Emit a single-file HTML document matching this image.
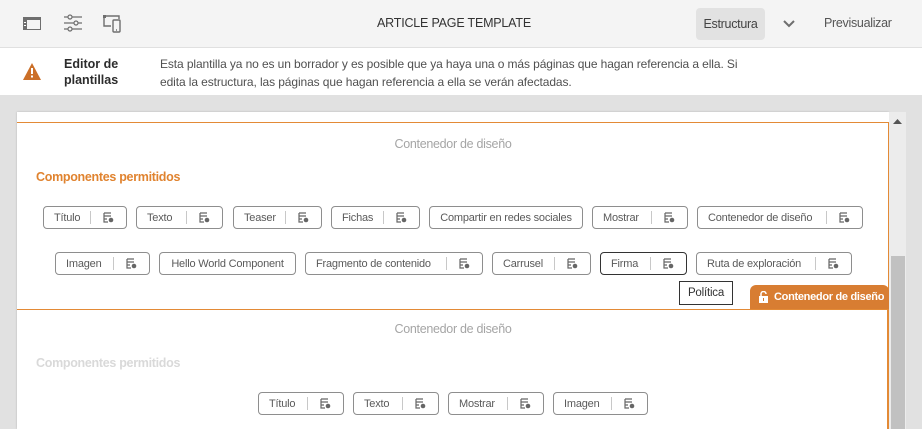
<!DOCTYPE html>
<html><head><meta charset="utf-8"><style>
*{margin:0;padding:0;box-sizing:border-box}
body{width:922px;height:429px;overflow:hidden;background:#e1e1e1;font-family:"Liberation Sans",sans-serif;position:relative;color:#4b4b4b}
.abs{position:absolute}
.top{left:0;top:0;width:922px;height:48px;background:#f4f4f4;border-bottom:1px solid #e0e0e0}
.warn{left:0;top:48px;width:922px;height:47px;background:#fff}
.chip{position:absolute;height:23px;border:1px solid #8e8e8e;border-radius:4px;background:#fff;font-size:11px;letter-spacing:-0.2px;color:#5a5a5a;line-height:22px}
.chip .t{position:absolute;left:10px;top:0;white-space:nowrap}
.chip .s{position:absolute;right:35px;top:4px;width:1px;height:13px;background:#c8c8c8}
.chip svg{position:absolute;right:12px;top:5px}
.chip.c .t{left:0;right:0;text-align:center}
</style></head><body>
<div class="abs top">
 <svg class="abs" style="left:23px;top:17px" width="18" height="13" viewBox="0 0 18 13"><rect x="0.5" y="0.5" width="17" height="12" fill="none" stroke="#6e6e6e"/><rect x="0" y="0" width="18" height="3" fill="#6e6e6e"/><rect x="0" y="0" width="4" height="13" fill="#6e6e6e"/><rect x="1" y="5" width="2" height="1" fill="#fff"/><rect x="1" y="8" width="2" height="1" fill="#fff"/></svg>
 <svg class="abs" style="left:64px;top:14px" width="18" height="18" viewBox="0 0 18 18" fill="none" stroke="#6e6e6e" stroke-width="1.2"><line x1="0" y1="3" x2="18" y2="3"/><line x1="0" y1="9" x2="18" y2="9"/><line x1="0" y1="15" x2="18" y2="15"/><circle cx="6" cy="3" r="2" fill="#f4f4f4"/><circle cx="12" cy="9" r="2" fill="#f4f4f4"/><circle cx="6" cy="15" r="2" fill="#f4f4f4"/></svg>
 <svg class="abs" style="left:103px;top:15px" width="19" height="18" viewBox="0 0 19 18" fill="none" stroke="#6e6e6e" stroke-width="1.4"><path d="M8 11H1V1h15v3"/><rect x="10" y="5" width="7" height="12" rx="1"/><line x1="13" y1="15" x2="14" y2="15"/><rect x="0" y="0" width="3" height="3" fill="#6e6e6e" stroke="none"/></svg>
 <div class="abs" style="left:0;width:922px;top:16px;text-align:center;font-size:12.5px;color:#333;padding-right:14px;letter-spacing:-0.2px">ARTICLE PAGE TEMPLATE</div>
 <div class="abs" style="left:696px;top:8px;width:69px;height:32px;background:#e2e2e2;border-radius:4px;font-size:12.5px;line-height:32px;text-align:center;color:#444;letter-spacing:-0.3px">Estructura</div>
 <svg class="abs" style="left:783px;top:20px" width="12" height="8" viewBox="0 0 12 8"><path d="M1 1l5 5 5-5" fill="none" stroke="#6e6e6e" stroke-width="2"/></svg>
 <div class="abs" style="left:824px;top:16px;font-size:12.5px;color:#555;letter-spacing:-0.3px">Previsualizar</div>
</div>
<div class="abs warn">
 <svg class="abs" style="left:23px;top:15px" width="18" height="17" viewBox="0 0 18 17"><path d="M9 0L18 17H0z" fill="#cb6f28"/><rect x="8" y="5" width="2" height="6" fill="#fff"/><rect x="8" y="12.5" width="2" height="2" fill="#fff"/></svg>
 <div class="abs" style="left:64px;top:8px;font-size:12.5px;font-weight:bold;color:#2c2c2c;line-height:16px">Editor de<br>plantillas</div>
 <div class="abs" style="left:160px;top:7px;font-size:12px;letter-spacing:-0.1px;color:#505050;line-height:18px;width:590px">Esta plantilla ya no es un borrador y es posible que ya haya una o más páginas que hagan referencia a ella. Si edita la estructura, las páginas que hagan referencia a ella se verán afectadas.</div>
</div>
<div class="abs" style="left:17px;top:112px;width:872px;height:317px;background:#fff;box-shadow:0 0 2px rgba(0,0,0,.2)"></div>
<div class="abs" style="left:889px;top:112px;width:17px;height:317px;background:#ececec"></div>
<svg class="abs" style="left:893px;top:119px" width="9" height="6"><path d="M0 5L4.5 0L9 5z" fill="#555"/></svg>
<div class="abs" style="left:891px;top:256px;width:14px;height:173px;background:#c1c1c1"></div>
<div class="abs" style="left:17px;top:122px;width:872px;height:188px;border:1px solid #e38a36;border-left:none"></div>
<div class="abs" style="left:887px;top:309px;width:2px;height:120px;background:#e38a36"></div>
<div class="abs" style="left:17px;top:137px;width:872px;text-align:center;font-size:12.5px;letter-spacing:-0.3px;color:#a5a5a5">Contenedor de diseño</div>
<div class="abs" style="left:36px;top:170px;font-size:12.5px;letter-spacing:-0.3px;font-weight:bold;color:#e0832f">Componentes permitidos</div>

<div class="chip" style="left:43px;top:206px;width:84px"><span class="t">Título</span><span class="s"></span><svg width="11" height="11" viewBox="0 0 11 11"><path d="M1 1h7M1 4h7M1 7h3M1 1v9h4" stroke="#666" fill="none" stroke-width="1.2"/><circle cx="8" cy="8" r="2.3" fill="#666"/></svg></div>
<div class="chip" style="left:136px;top:206px;width:87px"><span class="t">Texto</span><span class="s"></span><svg width="11" height="11" viewBox="0 0 11 11"><path d="M1 1h7M1 4h7M1 7h3M1 1v9h4" stroke="#666" fill="none" stroke-width="1.2"/><circle cx="8" cy="8" r="2.3" fill="#666"/></svg></div>
<div class="chip" style="left:233px;top:206px;width:89px"><span class="t">Teaser</span><span class="s"></span><svg width="11" height="11" viewBox="0 0 11 11"><path d="M1 1h7M1 4h7M1 7h3M1 1v9h4" stroke="#666" fill="none" stroke-width="1.2"/><circle cx="8" cy="8" r="2.3" fill="#666"/></svg></div>
<div class="chip" style="left:331px;top:206px;width:89px"><span class="t">Fichas</span><span class="s"></span><svg width="11" height="11" viewBox="0 0 11 11"><path d="M1 1h7M1 4h7M1 7h3M1 1v9h4" stroke="#666" fill="none" stroke-width="1.2"/><circle cx="8" cy="8" r="2.3" fill="#666"/></svg></div>
<div class="chip c" style="left:429px;top:206px;width:154px"><span class="t">Compartir en redes sociales</span></div>
<div class="chip" style="left:592px;top:206px;width:96px"><span class="t">Mostrar</span><span class="s"></span><svg width="11" height="11" viewBox="0 0 11 11"><path d="M1 1h7M1 4h7M1 7h3M1 1v9h4" stroke="#666" fill="none" stroke-width="1.2"/><circle cx="8" cy="8" r="2.3" fill="#666"/></svg></div>
<div class="chip" style="left:697px;top:206px;width:166px"><span class="t">Contenedor de diseño</span><span class="s"></span><svg width="11" height="11" viewBox="0 0 11 11"><path d="M1 1h7M1 4h7M1 7h3M1 1v9h4" stroke="#666" fill="none" stroke-width="1.2"/><circle cx="8" cy="8" r="2.3" fill="#666"/></svg></div>

<div class="chip" style="left:55px;top:252px;width:95px"><span class="t">Imagen</span><span class="s"></span><svg width="11" height="11" viewBox="0 0 11 11"><path d="M1 1h7M1 4h7M1 7h3M1 1v9h4" stroke="#666" fill="none" stroke-width="1.2"/><circle cx="8" cy="8" r="2.3" fill="#666"/></svg></div>
<div class="chip c" style="left:159px;top:252px;width:137px"><span class="t">Hello World Component</span></div>
<div class="chip" style="left:305px;top:252px;width:178px"><span class="t">Fragmento de contenido</span><span class="s"></span><svg width="11" height="11" viewBox="0 0 11 11"><path d="M1 1h7M1 4h7M1 7h3M1 1v9h4" stroke="#666" fill="none" stroke-width="1.2"/><circle cx="8" cy="8" r="2.3" fill="#666"/></svg></div>
<div class="chip" style="left:492px;top:252px;width:99px"><span class="t">Carrusel</span><span class="s"></span><svg width="11" height="11" viewBox="0 0 11 11"><path d="M1 1h7M1 4h7M1 7h3M1 1v9h4" stroke="#666" fill="none" stroke-width="1.2"/><circle cx="8" cy="8" r="2.3" fill="#666"/></svg></div>
<div class="chip" style="left:600px;top:252px;width:87px;border-color:#333"><span class="t">Firma</span><span class="s"></span><svg width="11" height="11" viewBox="0 0 11 11"><path d="M1 1h7M1 4h7M1 7h3M1 1v9h4" stroke="#666" fill="none" stroke-width="1.2"/><circle cx="8" cy="8" r="2.3" fill="#666"/></svg></div>
<div class="chip" style="left:696px;top:252px;width:156px"><span class="t">Ruta de exploración</span><span class="s"></span><svg width="11" height="11" viewBox="0 0 11 11"><path d="M1 1h7M1 4h7M1 7h3M1 1v9h4" stroke="#666" fill="none" stroke-width="1.2"/><circle cx="8" cy="8" r="2.3" fill="#666"/></svg></div>

<div class="abs" style="left:679px;top:281px;width:54px;height:24px;border:1px solid #333;background:#fff;font-size:11.5px;letter-spacing:-0.2px;line-height:22px;text-align:center;color:#333">Política</div>
<div class="abs" style="left:750px;top:285px;width:139px;height:24px;background:#d87d32;border-radius:6px 6px 0 0;color:#fff;font-size:11px;letter-spacing:-0.3px;font-weight:bold;line-height:24px;white-space:nowrap">
 <svg class="abs" style="left:9px;top:6px" width="9" height="12" viewBox="0 0 9 12"><path d="M2 5V3a2.5 2.5 0 0 1 5 0" fill="none" stroke="#fff" stroke-width="1.5"/><rect x="0" y="5" width="9" height="7" fill="#fff"/><rect x="4" y="7" width="1" height="3" fill="#d87d32"/></svg>
 <span class="abs" style="left:24px;top:0">Contenedor de diseño</span>
</div>

<div class="abs" style="left:17px;top:322px;width:872px;text-align:center;font-size:12.5px;letter-spacing:-0.3px;color:#a5a5a5">Contenedor de diseño</div>
<div class="abs" style="left:36px;top:356px;font-size:12.5px;letter-spacing:-0.3px;font-weight:bold;color:#d9d9d9">Componentes permitidos</div>
<div class="chip" style="left:258px;top:392px;width:86px"><span class="t">Título</span><span class="s"></span><svg width="11" height="11" viewBox="0 0 11 11"><path d="M1 1h7M1 4h7M1 7h3M1 1v9h4" stroke="#666" fill="none" stroke-width="1.2"/><circle cx="8" cy="8" r="2.3" fill="#666"/></svg></div>
<div class="chip" style="left:353px;top:392px;width:86px"><span class="t">Texto</span><span class="s"></span><svg width="11" height="11" viewBox="0 0 11 11"><path d="M1 1h7M1 4h7M1 7h3M1 1v9h4" stroke="#666" fill="none" stroke-width="1.2"/><circle cx="8" cy="8" r="2.3" fill="#666"/></svg></div>
<div class="chip" style="left:448px;top:392px;width:96px"><span class="t">Mostrar</span><span class="s"></span><svg width="11" height="11" viewBox="0 0 11 11"><path d="M1 1h7M1 4h7M1 7h3M1 1v9h4" stroke="#666" fill="none" stroke-width="1.2"/><circle cx="8" cy="8" r="2.3" fill="#666"/></svg></div>
<div class="chip" style="left:553px;top:392px;width:95px"><span class="t">Imagen</span><span class="s"></span><svg width="11" height="11" viewBox="0 0 11 11"><path d="M1 1h7M1 4h7M1 7h3M1 1v9h4" stroke="#666" fill="none" stroke-width="1.2"/><circle cx="8" cy="8" r="2.3" fill="#666"/></svg></div>
</body></html>
